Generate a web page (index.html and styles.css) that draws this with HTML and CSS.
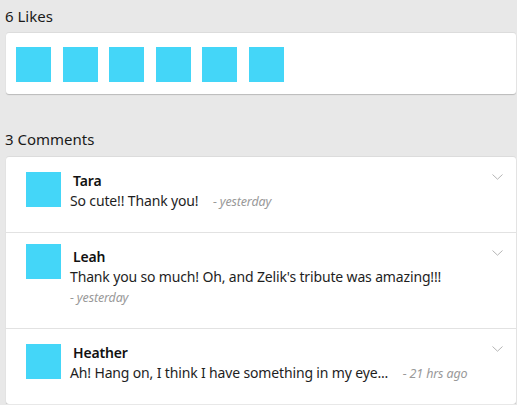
FILE: index.html
```html
<!DOCTYPE html>
<html>
<head>
<meta charset="utf-8">
<link rel="stylesheet" href="styles.css">
</head>
<body>
<div class="page">
  <h2 class="heading">6 Likes</h2>
  <div class="card likes">
    <div class="like"></div>
    <div class="like"></div>
    <div class="like"></div>
    <div class="like"></div>
    <div class="like"></div>
    <div class="like"></div>
  </div>

  <h2 class="heading heading--comments">3 Comments</h2>
  <div class="card comments">
    <div class="comment">
      <div class="avatar"></div>
      <div class="body">
        <div class="name">Tara</div>
        <div class="text"><span class="msg">So cute!! Thank you!</span> <span class="time">- yesterday</span></div>
      </div>
      <svg class="chev" width="11" height="6" viewBox="0 0 11 6"><path d="M0.5 0.5 L5.5 5.2 L10.5 0.5" fill="none" stroke="#b5b5b5" stroke-width="1"/></svg>
    </div>
    <div class="comment">
      <div class="avatar avatar--raised"></div>
      <div class="body">
        <div class="name">Leah</div>
        <div class="text"><span class="msg">Thank you so much! Oh, and Zelik's tribute was amazing!!!</span> <span class="time">- yesterday</span></div>
      </div>
      <svg class="chev" width="11" height="6" viewBox="0 0 11 6"><path d="M0.5 0.5 L5.5 5.2 L10.5 0.5" fill="none" stroke="#b5b5b5" stroke-width="1"/></svg>
    </div>
    <div class="comment">
      <div class="avatar"></div>
      <div class="body">
        <div class="name">Heather</div>
        <div class="text"><span class="msg">Ah! Hang on, I think I have something in my eye...</span> <span class="time">- 21 hrs ago</span></div>
      </div>
      <svg class="chev" width="11" height="6" viewBox="0 0 11 6"><path d="M0.5 0.5 L5.5 5.2 L10.5 0.5" fill="none" stroke="#b5b5b5" stroke-width="1"/></svg>
    </div>
  </div>
</div>
</body>
</html>
```
FILE: styles.css
```css
html, body {
  margin: 0;
  padding: 0;
  background: #e8e8e8;
}
body {
  font-family: "Noto Sans", "Open Sans", sans-serif;
  color: #1e1e1e;
}
.page {
  padding: 6px 1px 0 5px;
}
.heading {
  margin: 0;
  font-size: 15px;
  line-height: 20px;
  font-weight: 400;
  color: #1a1a1a;
}
.heading--comments {
  margin-top: 35px;
}
.card {
  margin: 7px 0 0 1px;
  background: #fff;
  border-radius: 3px;
  box-shadow: 0 1px 1px rgba(0,0,0,0.2), 0 -1px 0 rgba(0,0,0,0.05);
}
.likes {
  display: flex;
  gap: 11.6px;
  padding: 14px 10px 12px 10px;
}
.like {
  width: 35px;
  height: 35px;
  background: #44d6f8;
}
.comments {
  margin-top: 8px;
}
.comment {
  display: flex;
  align-items: flex-start;
  padding: 14px 13px 20px 20px;
  border-bottom: 1px solid #e2e2e2;
}
.comment:last-child {
  border-bottom: none;
}
.avatar {
  flex: none;
  width: 35px;
  height: 35px;
  margin-top: 1px;
  background: #44d6f8;
}
.avatar--raised {
  margin-top: -3px;
}
.body {
  flex: 1;
  margin-left: 9px;
  margin-right: 8px;
  font-size: 14px;
  line-height: 20px;
  letter-spacing: -0.15px;
}
.name {
  font-weight: 600;
  padding-left: 3px;
  color: #111;
}
.msg {
  padding-right: 11px;
}
.time {
  font-size: 12.5px;
  font-style: italic;
  color: #999;
  white-space: nowrap;
}
.chev {
  flex: none;
  margin-top: 3px;
}
```
